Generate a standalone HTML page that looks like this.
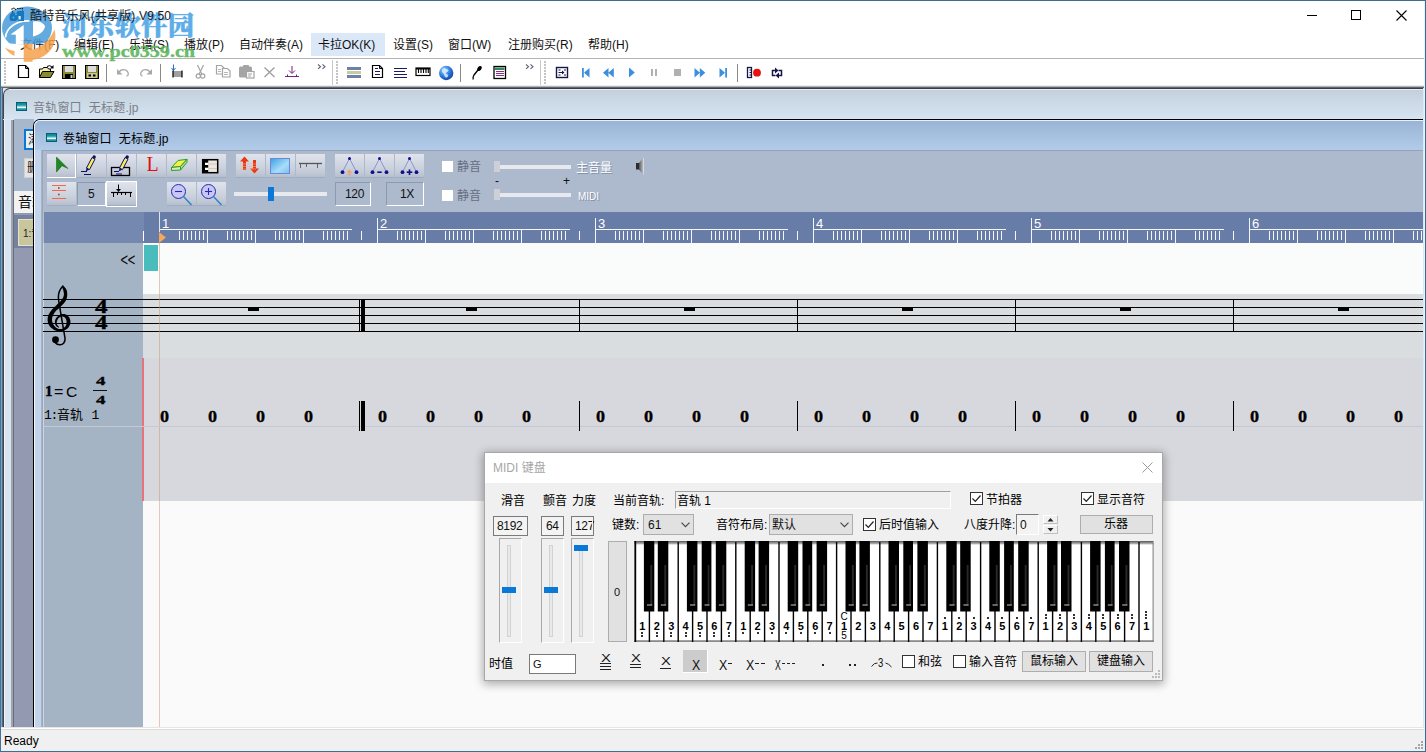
<!DOCTYPE html><html lang="zh-CN"><head><meta charset="utf-8"><title>酷特音乐风(共享版) V9.50</title><style>
*{box-sizing:border-box;margin:0;padding:0}
html,body{width:1426px;height:752px;overflow:hidden;background:#fff}
body{position:relative;font-family:"Liberation Sans","Noto Sans CJK SC",sans-serif;font-size:12px;color:#000}
div{position:absolute}
svg{position:absolute;overflow:visible}
.t{white-space:nowrap;line-height:1}
.s{white-space:nowrap;line-height:1;font-family:"Liberation Serif","Noto Serif CJK SC",serif;font-weight:bold}
.m{white-space:nowrap;line-height:1;font-family:"Liberation Mono","Noto Sans CJK SC",monospace}
</style></head><body>
<div style="left:0px;top:0px;width:1426px;height:752px;background:#fff;border:1px solid #3f6e8c;"></div>
<svg style="left:1300px;top:5px" width="120" height="22" viewBox="0 0 120 22"><g stroke="#000" stroke-width="1" fill="none" shape-rendering="crispEdges"><path d="M7 10.5h10"/><rect x="51.5" y="5.5" width="9" height="9"/></g><path d="M96.5 5.5l10 10M106.5 5.5l-10 10" stroke="#000" stroke-width="1.1" fill="none"/></svg>
<div style="left:311px;top:33px;width:74px;height:23px;background:#dbe8f8;"></div>
<div class="t" style="left:20px;top:39px;font-size:12px;color:#111;">文件(F)</div>
<div class="t" style="left:74px;top:39px;font-size:12px;color:#111;">编辑(E)</div>
<div class="t" style="left:129px;top:39px;font-size:12px;color:#111;">乐谱(S)</div>
<div class="t" style="left:184px;top:39px;font-size:12px;color:#111;">播放(P)</div>
<div class="t" style="left:239px;top:39px;font-size:12px;color:#111;">自动伴奏(A)</div>
<div class="t" style="left:318px;top:39px;font-size:12px;color:#111;">卡拉OK(K)</div>
<div class="t" style="left:393px;top:39px;font-size:12px;color:#111;">设置(S)</div>
<div class="t" style="left:448px;top:39px;font-size:12px;color:#111;">窗口(W)</div>
<div class="t" style="left:508px;top:39px;font-size:12px;color:#111;">注册购买(R)</div>
<div class="t" style="left:588px;top:39px;font-size:12px;color:#111;">帮助(H)</div>
<div style="left:1px;top:58px;width:1424px;height:1px;background:#b4b4b4;"></div>
<div style="left:4px;top:61px;width:2px;height:2px;background:#c4c4c4;"></div>
<div style="left:4px;top:64px;width:2px;height:2px;background:#c4c4c4;"></div>
<div style="left:4px;top:67px;width:2px;height:2px;background:#c4c4c4;"></div>
<div style="left:4px;top:70px;width:2px;height:2px;background:#c4c4c4;"></div>
<div style="left:4px;top:73px;width:2px;height:2px;background:#c4c4c4;"></div>
<div style="left:4px;top:76px;width:2px;height:2px;background:#c4c4c4;"></div>
<div style="left:4px;top:79px;width:2px;height:2px;background:#c4c4c4;"></div>
<div style="left:4px;top:82px;width:2px;height:2px;background:#c4c4c4;"></div>
<div style="left:336px;top:61px;width:2px;height:2px;background:#c4c4c4;"></div>
<div style="left:336px;top:64px;width:2px;height:2px;background:#c4c4c4;"></div>
<div style="left:336px;top:67px;width:2px;height:2px;background:#c4c4c4;"></div>
<div style="left:336px;top:70px;width:2px;height:2px;background:#c4c4c4;"></div>
<div style="left:336px;top:73px;width:2px;height:2px;background:#c4c4c4;"></div>
<div style="left:336px;top:76px;width:2px;height:2px;background:#c4c4c4;"></div>
<div style="left:336px;top:79px;width:2px;height:2px;background:#c4c4c4;"></div>
<div style="left:336px;top:82px;width:2px;height:2px;background:#c4c4c4;"></div>
<div style="left:544px;top:61px;width:2px;height:2px;background:#c4c4c4;"></div>
<div style="left:544px;top:64px;width:2px;height:2px;background:#c4c4c4;"></div>
<div style="left:544px;top:67px;width:2px;height:2px;background:#c4c4c4;"></div>
<div style="left:544px;top:70px;width:2px;height:2px;background:#c4c4c4;"></div>
<div style="left:544px;top:73px;width:2px;height:2px;background:#c4c4c4;"></div>
<div style="left:544px;top:76px;width:2px;height:2px;background:#c4c4c4;"></div>
<div style="left:544px;top:79px;width:2px;height:2px;background:#c4c4c4;"></div>
<div style="left:544px;top:82px;width:2px;height:2px;background:#c4c4c4;"></div>
<div style="left:332px;top:60px;width:1px;height:26px;background:#c8c8c8;"></div>
<div style="left:540px;top:60px;width:1px;height:26px;background:#c8c8c8;"></div>
<div style="left:106px;top:64px;width:1px;height:18px;background:#8a8a8a;"></div>
<div style="left:160px;top:64px;width:1px;height:18px;background:#8a8a8a;"></div>
<div style="left:460px;top:64px;width:1px;height:18px;background:#8a8a8a;"></div>
<div style="left:737px;top:64px;width:1px;height:18px;background:#8a8a8a;"></div>
<svg style="left:0;top:59px" width="800" height="27" viewBox="0 59 800 27"><path d="M18.500 65.500h7l3 3v9h-10z" fill="#fff" stroke="#000" stroke-width="1.200"/><path d="M25.500 65.500v3h3" fill="none" stroke="#000" stroke-width="1"/><path d="M39.500 77.500v-8.500h3l1-1.500h4l1 1.500h2v2.500" fill="#f4f0a8" stroke="#000" stroke-width="1"/><path d="M39.500 77.500l3-6h11.500l-3.500 6z" fill="#8b8a2e" stroke="#000" stroke-width="1"/><path d="M47 66.500q3-2 5 .5" fill="none" stroke="#000" stroke-width="1"/><path d="M53.500 65v3.500h-3.500z" fill="#000"/><rect x="62.5" y="65.500" width="13" height="13" fill="#8b8a3a" stroke="#000" stroke-width="1"/><rect x="65" y="66" width="8" height="6" fill="#dcdcdc"/><rect x="65" y="74" width="8" height="4.500" fill="#000"/><rect x="70.5" y="75" width="2" height="3" fill="#ccc"/><rect x="85.5" y="65.500" width="13" height="13" fill="#8b8a3a" stroke="#000" stroke-width="1"/><rect x="88" y="66" width="8" height="6" fill="#dcdcdc"/><rect x="87" y="73" width="10" height="5" fill="#c8c89a"/><rect x="88.5" y="74.500" width="2.500" height="2" fill="#000"/><rect x="93" y="74.500" width="2.500" height="2" fill="#000"/><g fill="none" stroke="#a8a8a8" stroke-width="1.300"><path d="M119 72.500c1.500-3.500 7-4 9 0 1 2.500-.5 3.500-1.500 3.500"/><path d="M150 72.500c-1.500-3.500-7-4-9 0-1 2.500.5 3.500 1.500 3.500"/></g><path d="M117 69v5.500h5.500z" fill="#a8a8a8"/><path d="M152 69v5.500h-5.500z" fill="#a8a8a8"/><path d="M173.500 64.500v6M171.500 68l2 2.500 2-2.500" fill="none" stroke="#2a6fd0" stroke-width="1"/><rect x="173" y="71" width="9" height="6" fill="#a0a0a0"/><path d="M173 70.500v7M182 70.500v7" stroke="#000" stroke-width="1.200"/><g fill="none" stroke="#a4a4a4" stroke-width="1.200"><path d="M197.500 65l4.500 9.500M203.500 65l-4.500 9.500"/><circle cx="198.300" cy="76" r="2.100"/><circle cx="202.700" cy="76" r="2.100"/></g><g fill="#fff" stroke="#a4a4a4" stroke-width="1.200"><path d="M216.500 65.500h5l2.500 2.500v6h-7.500z"/><path d="M222.500 68.500h5l2.500 2.500v6h-7.500z"/></g><path d="M218 69.500h3M218 71.500h3M224 72.500h4M224 74.500h4" stroke="#b8b8b8" stroke-width="1" shape-rendering="crispEdges"/><rect x="239" y="66.500" width="13" height="11" rx="1.500" fill="#a4a4a4"/><rect x="243" y="65" width="6" height="3" rx="1" fill="#a4a4a4"/><rect x="246.500" y="71.500" width="7.500" height="6.500" fill="#fff" stroke="#a4a4a4" stroke-width="1.200"/><path d="M248 74h4M248 76h3" stroke="#a4a4a4" stroke-width="1"/><path d="M264.500 67.500l10 9.500M274.500 67.500l-10 9.500" stroke="#a0a0a0" stroke-width="1.400" fill="none"/><path d="M292 66v7M289 70.500l3 3 3-3M285 76.500h14M287.500 76.500v-2M296.500 76.500v-2" stroke="#7a1f7a" stroke-width="1" fill="none"/><path d="M318 64.500l2.500 2.200-2.500 2.200M322.5 64.500l2.500 2.200-2.500 2.200" stroke="#5a6478" stroke-width="1.100" fill="none"/><path d="M526 64.500l2.500 2.200-2.500 2.200M530.5 64.500l2.500 2.200-2.500 2.200" stroke="#5a6478" stroke-width="1.100" fill="none"/><rect x="347" y="67" width="14" height="3" fill="#6d80a8"/><rect x="347" y="71" width="14" height="3" fill="#c8caa2"/><rect x="347" y="75" width="14" height="3" fill="#6d80a8"/><path d="M372.500 65.500h7l3 3v9h-10z" fill="#fff" stroke="#000" stroke-width="1.200"/><path d="M379.500 65.500v3h3" fill="none" stroke="#000" stroke-width="1"/><path d="M375 68.500h3M375 71.500h5M375 74.500h5" stroke="#1a1a60" stroke-width="1" shape-rendering="crispEdges"/><path d="M394 68.500h13M394 71.500h11M394 74.500h13M394 77.500h13" stroke="#1a1a60" stroke-width="1" shape-rendering="crispEdges"/><rect x="416" y="68" width="14" height="7.500" fill="#fff" stroke="#000" stroke-width="1.200"/><rect x="416" y="68" width="14" height="1.500" fill="#000"/><path d="M418.500 69v4M421 69v4M423.500 69v4M426 69v4M428.300 69v4" stroke="#000" stroke-width="1.100"/><defs><radialGradient id="gl" cx=".35" cy=".3" r=".8"><stop offset="0" stop-color="#9fd4ff"/><stop offset=".5" stop-color="#2f7fe0"/><stop offset="1" stop-color="#103a9a"/></radialGradient></defs><circle cx="446.200" cy="73" r="7.200" fill="url(#gl)"/><path d="M443 68.500c2-1 3 .5 4.500 1s1 2-.5 2.500-1 2 .5 2.500.5 2.500-1 3-2-1.500-2.500-3-2-2-2-3.500.3-2 1-2.500z" fill="#d8f0ff" opacity=".85"/><path d="M480 67.500l-6 7.500c-1 1.500-1.500 2.500-.8 4.500" stroke="#000" stroke-width="1.300" fill="none"/><ellipse cx="479.500" cy="68.500" rx="2.800" ry="1.900" transform="rotate(-50 479.500 68.500)" fill="#000"/><rect x="494" y="66.500" width="11.500" height="12" fill="#fff" stroke="#000" stroke-width="1.300"/><rect x="495" y="67.500" width="9.500" height="2.500" fill="#2e8b57"/><path d="M496 71.500h8M496 73.500h8M496 75.500h8" stroke="#8a2a8a" stroke-width="1" shape-rendering="crispEdges"/><rect x="556.500" y="67.500" width="11" height="10" fill="#fff" stroke="#15154a" stroke-width="1.400"/><path d="M558.500 70h2M558.500 72.500h5M558.500 75h2M564 70h2M564 75h2" stroke="#15154a" stroke-width="1"/><path d="M562 70.500l2.500 2-2.500 2z" fill="#15154a"/><g fill="#3c8fdc"><rect x="582" y="68" width="1.800" height="9.500"/><path d="M589.500 68v9.500l-5.500-4.750z"/><path d="M608.500 68v9.500l-5.500-4.750zM613.800 68v9.500l-5.500-4.750z"/><path d="M629 67.500v10l5.800-5z"/><path d="M694.500 68v9.500l5.500-4.750zM699.800 68v9.500l5.500-4.750z"/><path d="M719.500 68v9.500l5.500-4.750z"/><rect x="725.200" y="68" width="1.800" height="9.500"/></g><g fill="#b0b0b0"><rect x="651" y="69" width="2" height="7"/><rect x="655" y="69" width="2" height="7"/><rect x="674" y="69" width="7" height="7"/></g><rect x="747.500" y="67.500" width="4" height="10" fill="#fff" stroke="#15154a" stroke-width="1.300"/><path d="M749.500 70h2M749.500 72.500h2M749.500 75h2" stroke="#15154a" stroke-width="1"/><circle cx="757" cy="72.700" r="3.900" fill="#e81010"/><path d="M775.500 70.500h-3v5h3M778.500 70.500h3v5h-3" fill="none" stroke="#15154a" stroke-width="1.500"/><path d="M775 67.500v6l3.500-3zM779 72.500v6l-3.500-3z" fill="#15154a"/></svg>
<div style="left:1px;top:85px;width:1424px;height:1px;background:#ececec;"></div>
<div style="left:1px;top:86px;width:1424px;height:1px;background:#b4b4b4;"></div>
<div style="left:1px;top:87px;width:1424px;height:1px;background:#62666c;"></div>
<div style="left:1px;top:88px;width:1424px;height:639px;background:#dbe7f1;"></div>
<div style="left:1px;top:88px;width:1px;height:639px;background:#7ba3c4;"></div>
<div style="left:2px;top:88px;width:1px;height:639px;background:#5c6874;"></div>
<div style="left:3px;top:88px;width:1421px;height:31px;background:linear-gradient(#c3d0dc,#d6e4f1);border-top-left-radius:7px;border-top:1px solid #3a3e44;border-left:1px solid #3c4652;"></div>
<div style="left:9px;top:89px;width:1415px;height:1px;background:#e6eef6;"></div>
<div style="left:3px;top:120px;width:1px;height:607px;background:#3c4652;"></div>
<div style="left:4px;top:120px;width:1px;height:607px;background:#f0f4fc;"></div>
<div style="left:5px;top:120px;width:6px;height:607px;background:#d8e4f0;"></div>
<div style="left:11px;top:120px;width:2px;height:607px;background:#a0a4ae;"></div>
<div style="left:13px;top:120px;width:1px;height:607px;background:#686c78;"></div>
<div style="left:16px;top:102px;width:11px;height:9px;background:linear-gradient(#0d8a94 0,#1a9aa0 30%,#aee8ea 55%,#fff 65%,#35aab0 80%,#0d8a94 100%);border:1px solid #0a5b78;"></div>
<div class="t" style="left:33px;top:102px;font-size:12px;color:#7a8088;letter-spacing:.2px;">音轨窗口&nbsp; 无标题.jp</div>
<div style="left:14px;top:119px;width:20px;height:73px;background:#a9b7cc;"></div>
<div style="left:24px;top:129px;width:12px;height:21px;background:#e9eff7;border:2px solid #0a78d6;"></div>
<div class="t" style="left:28px;top:134px;font-size:12px;color:#222;">添加</div>
<div style="left:24px;top:158px;width:12px;height:20px;background:#e4e4e4;border:1px solid #d0d0d0;"></div>
<div class="t" style="left:27px;top:162px;font-size:12px;color:#222;">删除</div>
<div style="left:14px;top:191px;width:20px;height:22px;background:#f2f2f2;"></div>
<div class="t" style="left:18px;top:195px;font-size:14px;color:#111;">音轨</div>
<div style="left:14px;top:213px;width:20px;height:514px;background:#9299b0;"></div>
<div style="left:14px;top:215px;width:20px;height:33px;background:#74819f;"></div>
<div style="left:18px;top:219px;width:16px;height:27px;background:#c9c59c;border:1px solid #e4e2cc;"></div>
<div class="t" style="left:23px;top:229px;font-size:10px;color:#222;">1:音轨 1</div>
<div style="left:33px;top:119px;width:1391px;height:608px;background:#c2d4ec;border-top-left-radius:7px;border-left:1px solid #000;border-top:1px solid #000;"></div>
<div style="left:34px;top:120px;width:1390px;height:30px;background:linear-gradient(#9ab4d6,#b2cbe9);border-top-left-radius:6px;border-top:1px solid #e8f0fa;border-left:1px solid #e8f0fa;"></div>
<div style="left:46px;top:133px;width:11px;height:9px;background:linear-gradient(#0d8a94 0,#1a9aa0 30%,#aee8ea 55%,#fff 65%,#35aab0 80%,#0d8a94 100%);border:1px solid #0a5b78;"></div>
<div class="t" style="left:63px;top:133px;font-size:12px;color:#000;letter-spacing:.2px;">卷轴窗口&nbsp; 无标题.jp</div>
<div style="left:41px;top:150px;width:1px;height:577px;background:#a8b2c2;"></div>
<div style="left:42px;top:150px;width:1px;height:577px;background:#9ca6b8;"></div>
<div style="left:43px;top:150px;width:1381px;height:62px;background:#adb9cd;border-top:1px solid #93a2b8;"></div>
<div style="left:47px;top:154px;width:29px;height:24px;background:linear-gradient(#dfe3ec 0,#d0d6e1 45%,#c3cad7 80%,#b6bfce 100%);border-right:1px solid #fff;border-bottom:1px solid #fff;"></div>
<div style="left:77px;top:154px;width:29px;height:24px;background:linear-gradient(#dfe3ec 0,#d0d6e1 45%,#c3cad7 80%,#b6bfce 100%);border-bottom:1px solid #a0acbf;"></div>
<div style="left:107px;top:154px;width:29px;height:24px;background:linear-gradient(#dfe3ec 0,#d0d6e1 45%,#c3cad7 80%,#b6bfce 100%);border-bottom:1px solid #a0acbf;"></div>
<div style="left:137px;top:154px;width:29px;height:24px;background:linear-gradient(#dfe3ec 0,#d0d6e1 45%,#c3cad7 80%,#b6bfce 100%);border-bottom:1px solid #a0acbf;"></div>
<div style="left:167px;top:154px;width:29px;height:24px;background:linear-gradient(#dfe3ec 0,#d0d6e1 45%,#c3cad7 80%,#b6bfce 100%);border-bottom:1px solid #a0acbf;"></div>
<div style="left:197px;top:154px;width:29px;height:24px;background:linear-gradient(#dfe3ec 0,#d0d6e1 45%,#c3cad7 80%,#b6bfce 100%);border-bottom:1px solid #a0acbf;"></div>
<div style="left:236px;top:154px;width:29px;height:24px;background:linear-gradient(#dfe3ec 0,#d0d6e1 45%,#c3cad7 80%,#b6bfce 100%);border-bottom:1px solid #a0acbf;"></div>
<div style="left:266px;top:154px;width:29px;height:24px;background:linear-gradient(#dfe3ec 0,#d0d6e1 45%,#c3cad7 80%,#b6bfce 100%);border-bottom:1px solid #a0acbf;"></div>
<div style="left:296px;top:154px;width:29px;height:24px;background:linear-gradient(#dfe3ec 0,#d0d6e1 45%,#c3cad7 80%,#b6bfce 100%);border-bottom:1px solid #a0acbf;"></div>
<div style="left:335px;top:154px;width:29px;height:24px;background:linear-gradient(#dfe3ec 0,#d0d6e1 45%,#c3cad7 80%,#b6bfce 100%);border-bottom:1px solid #a0acbf;"></div>
<div style="left:365px;top:154px;width:29px;height:24px;background:linear-gradient(#dfe3ec 0,#d0d6e1 45%,#c3cad7 80%,#b6bfce 100%);border-bottom:1px solid #a0acbf;"></div>
<div style="left:395px;top:154px;width:29px;height:24px;background:linear-gradient(#dfe3ec 0,#d0d6e1 45%,#c3cad7 80%,#b6bfce 100%);border-bottom:1px solid #a0acbf;"></div>
<div style="left:47px;top:182px;width:29px;height:24px;background:linear-gradient(#dfe3ec 0,#d0d6e1 45%,#c3cad7 80%,#b6bfce 100%);border-bottom:1px solid #a0acbf;"></div>
<div style="left:77px;top:182px;width:29px;height:24px;background:#adb9cd;border-top:1px solid #8d9bb0;border-left:1px solid #8d9bb0;border-right:1px solid #fff;border-bottom:1px solid #fff;"></div>
<div style="left:106px;top:181px;width:31px;height:26px;background:#fff;"></div>
<div style="left:107px;top:182px;width:29px;height:24px;background:linear-gradient(#dfe3ec 0,#d0d6e1 45%,#c3cad7 80%,#b6bfce 100%);border-bottom:1px solid #a0acbf;"></div>
<div style="left:167px;top:182px;width:29px;height:24px;background:linear-gradient(#dfe3ec 0,#d0d6e1 45%,#c3cad7 80%,#b6bfce 100%);border-bottom:1px solid #a0acbf;"></div>
<div style="left:197px;top:182px;width:29px;height:24px;background:linear-gradient(#dfe3ec 0,#d0d6e1 45%,#c3cad7 80%,#b6bfce 100%);border-bottom:1px solid #a0acbf;"></div>
<div style="left:335px;top:182px;width:36px;height:24px;background:#adb9cd;border-top:1px solid #8d9bb0;border-left:1px solid #8d9bb0;border-right:1px solid #fff;border-bottom:1px solid #fff;"></div>
<div style="left:386px;top:182px;width:38px;height:24px;background:#adb9cd;border-top:1px solid #8d9bb0;border-left:1px solid #8d9bb0;border-right:1px solid #fff;border-bottom:1px solid #fff;"></div>
<div class="t" style="left:345px;top:188px;font-size:12px;color:#111;letter-spacing:-0.3px;">120</div>
<div class="t" style="left:400px;top:188px;font-size:12px;color:#111;letter-spacing:-0.5px;">1X</div>
<div class="t" style="left:88px;top:188px;font-size:12px;color:#111;">5</div>
<div style="left:234px;top:192px;width:93px;height:4px;background:#e6e9ee;"></div>
<div style="left:268px;top:187px;width:6px;height:14px;background:#0a78d6;"></div>
<div style="left:442px;top:161px;width:11px;height:11px;background:#fff;"></div>
<div style="left:442px;top:190px;width:11px;height:11px;background:#fff;"></div>
<div class="t" style="left:457px;top:161px;font-size:12px;color:#667083;">静音</div>
<div class="t" style="left:457px;top:190px;font-size:12px;color:#667083;">静音</div>
<div style="left:494px;top:165px;width:77px;height:4px;background:#e6e9ee;"></div>
<div style="left:494px;top:161px;width:6px;height:11px;background:#cdd0d6;"></div>
<div style="left:494px;top:193px;width:77px;height:4px;background:#e6e9ee;"></div>
<div style="left:494px;top:189px;width:6px;height:11px;background:#cdd0d6;"></div>
<div class="t" style="left:495px;top:175px;font-size:12px;color:#111;">-</div>
<div class="t" style="left:563px;top:175px;font-size:12px;color:#111;">+</div>
<div class="t" style="left:576px;top:162px;font-size:12px;color:#fff;text-shadow:1px 1px 0 #8391a8;">主音量</div>
<div class="t" style="left:578px;top:192px;font-size:10px;color:#fff;text-shadow:1px 1px 0 #8391a8;">MIDI</div>
<svg style="left:0;top:150px" width="700" height="62" viewBox="0 150 700 62"><path d="M56.500 157v15l5.500-6.300 6 2.800z" fill="#1c8a1c" stroke="#0b5a0b" stroke-width=".5"/><g transform="translate(85 156)"><path d="M1.500 12l5.500-10.500 3 1.600-5.500 10.500z" fill="#f6ee52" stroke="#10106a" stroke-width="1"/><path d="M7 1.500l1.200-1.800c.8-.9 3 .2 2.600 1.500l-.9 1.900z" fill="#10106a"/><path d="M1.500 12l-.7 3.200 3.600-1.500z" fill="#10106a"/></g><path d="M81 171.500h6M84 174.500h7" stroke="#10106a" stroke-width="1.100"/><rect x="111.500" y="167.500" width="18" height="8" fill="none" stroke="#000" stroke-width="1.300"/><g transform="translate(118 156)"><path d="M1.500 12l5.500-10.500 3 1.600-5.500 10.500z" fill="#f6ee52" stroke="#10106a" stroke-width="1"/><path d="M7 1.500l1.200-1.800c.8-.9 3 .2 2.600 1.500l-.9 1.900z" fill="#10106a"/><path d="M1.500 12l-.7 3.200 3.600-1.500z" fill="#10106a"/></g><path d="M114 171.500h5M116 174h6" stroke="#10106a" stroke-width="1.100"/><path d="M171.500 167.500L178 160.500L187 159.300L180.500 166.500z" fill="#f4f04a" stroke="#2c9c2c" stroke-width="1" stroke-linejoin="round"/><path d="M171.500 167.500L180.500 166.500V170L171.500 170.500z" fill="#dcebb0" stroke="#2c9c2c" stroke-width="1" stroke-linejoin="round"/><path d="M180.500 166.500L187 159.300V162.300L180.500 170z" fill="#b8d890" stroke="#2c9c2c" stroke-width="1" stroke-linejoin="round"/><rect x="202.700" y="159.700" width="15" height="13" fill="#ece8e0" stroke="#000" stroke-width="1.500"/><rect x="202.700" y="159.700" width="5.500" height="13" fill="#000"/><rect x="205" y="162.700" width="3.500" height="2.300" fill="#fff"/><rect x="205" y="167.700" width="3.500" height="2.300" fill="#fff"/><path d="M209 164h8M209 168.500h8" stroke="#c8c0b0" stroke-width=".8"/><g fill="#e8380d"><path d="M244.500 156.500l-4.500 5h3v8.500h3v-8.500h3z"/><path d="M254.500 173.500l-4.500-5h3v-8.500h3v8.500h3z"/></g><path d="M240 164h16M240 166.500h16M240 169h16" stroke="#f0b0a0" stroke-width=".6"/><defs><linearGradient id="bg8" x1="0" y1="0" x2="1" y2="1"><stop offset="0" stop-color="#3aa0e8"/><stop offset=".6" stop-color="#a8dcf8"/><stop offset="1" stop-color="#7cc0f0"/></linearGradient></defs><rect x="270.500" y="158.500" width="19" height="15" fill="url(#bg8)" stroke="#6a8ad8" stroke-width="1"/><path d="M299 163.500h23" stroke="#555" stroke-width="1.300"/><path d="M300.500 164v4M306.500 164v3M317.500 164v4" stroke="#666" stroke-width="1"/><path d="M349.5 158.500l-7 13.500M349.5 158.500l7 13.500" stroke="#6a78c8" stroke-width=".7" fill="none"/><circle cx="349.5" cy="158.600" r="1.500" fill="#10108a"/><circle cx="342.5" cy="172.200" r="1.900" fill="#10108a"/><circle cx="356.5" cy="172.200" r="1.900" fill="#10108a"/><path d="M349.5 169.500l-2.800 3h1.800v3h2v-3h1.800z" fill="#f4a070"/><path d="M379.5 158.500l-7 13.500M379.5 158.500l7 13.500" stroke="#6a78c8" stroke-width=".7" fill="none"/><circle cx="379.5" cy="158.600" r="1.500" fill="#10108a"/><circle cx="372.5" cy="172.200" r="1.900" fill="#10108a"/><circle cx="386.5" cy="172.200" r="1.900" fill="#10108a"/><rect x="377.3" y="171.400" width="4.400" height="1.600" fill="#10108a"/><path d="M409.5 158.500l-7 13.500M409.5 158.500l7 13.500" stroke="#6a78c8" stroke-width=".7" fill="none"/><circle cx="409.5" cy="158.600" r="1.500" fill="#10108a"/><circle cx="402.5" cy="172.200" r="1.900" fill="#10108a"/><circle cx="416.5" cy="172.200" r="1.900" fill="#10108a"/><rect x="406.7" y="171.400" width="5.600" height="1.600" fill="#10108a"/><rect x="408.7" y="169.400" width="1.600" height="5.600" fill="#10108a"/><path d="M52 185.500h14M52 190.500h14M52 198.500h14" stroke="#f06848" stroke-width="1"/><rect x="58" y="187.200" width="1.600" height="1.600" fill="#c83018"/><rect x="58" y="193.700" width="1.600" height="1.600" fill="#c83018"/><path d="M111 192.500h21" stroke="#000" stroke-width="1.200"/><path d="M113.500 192.500v4.500M117.500 192.500v2.500M121.500 192.500v2.500M125.500 192.500v2.500M130.500 192.500v4.500M118.500 184.500v6" stroke="#000" stroke-width="1"/><path d="M116 189l2.500 3 2.500-3z" fill="#000"/><circle cx="178.5" cy="191.500" r="7" fill="#c8c8f4" stroke="#2828b8" stroke-width="1"/><path d="M183.5 196.500l8 8.500" stroke="#2a80c0" stroke-width="1.400"/><path d="M175.0 191.500h7" stroke="#2828b8" stroke-width="1.100"/><circle cx="208.5" cy="191.500" r="7" fill="#c8c8f4" stroke="#2828b8" stroke-width="1"/><path d="M213.5 196.500l8 8.500" stroke="#2a80c0" stroke-width="1.400"/><path d="M205.0 191.500h7" stroke="#2828b8" stroke-width="1.100"/><path d="M208.5 188v7" stroke="#2828b8" stroke-width="1.100"/><defs><linearGradient id="spk" x1="0" y1="0" x2="1" y2="0"><stop offset="0" stop-color="#555"/><stop offset="1" stop-color="#b8bcc4"/></linearGradient></defs><rect x="636" y="163" width="3" height="6.500" fill="#2c2c2c"/><path d="M639 163l4-5v16.500l-4-5z" fill="url(#spk)"/><path d="M643.500 158v16.500" stroke="#d4dae4" stroke-width="1"/></svg>
<div class="s" style="left:146.5px;top:154.3px;font-size:20px;color:#e01010;font-weight:normal;">L</div>
<div style="left:43px;top:212px;width:1px;height:31px;background:#b4c0d2;"></div>
<div style="left:44px;top:212px;width:100px;height:31px;background:#7488b0;"></div>
<div style="left:144px;top:212px;width:1280px;height:31px;background:#677ca7;"></div>
<div style="left:143px;top:231px;width:1px;height:10px;background:#fff;"></div>
<svg style="left:0;top:0" width="1426" height="752" shape-rendering="crispEdges"><g stroke="#f4f6fa" stroke-width="1" fill="none"><path d="M159.5 212v20" stroke="#dfe4ee"/><path d="M160 229.500H352"/><path d="M179.5 231v9"/><path d="M183.5 231v9"/><path d="M187.5 231v9"/><path d="M191.5 231v9"/><path d="M195.5 231v9"/><path d="M199.5 231v9"/><path d="M203.5 231v9"/><path d="M207.5 230v13"/><path d="M227.5 231v9"/><path d="M231.5 231v9"/><path d="M235.5 231v9"/><path d="M239.5 231v9"/><path d="M243.5 231v9"/><path d="M247.5 231v9"/><path d="M251.5 231v9"/><path d="M255.5 230v13"/><path d="M275.5 231v9"/><path d="M279.5 231v9"/><path d="M283.5 231v9"/><path d="M287.5 231v9"/><path d="M291.5 231v9"/><path d="M295.5 231v9"/><path d="M299.5 231v9"/><path d="M303.5 230v13"/><path d="M323.5 231v9"/><path d="M327.5 231v9"/><path d="M331.5 231v9"/><path d="M335.5 231v9"/><path d="M339.5 231v9"/><path d="M343.5 231v9"/><path d="M347.5 231v9"/><path d="M361.5 231v9"/><path d="M377.5 218v25"/><path d="M378 229.500H570"/><path d="M397.5 231v9"/><path d="M401.5 231v9"/><path d="M405.5 231v9"/><path d="M409.5 231v9"/><path d="M413.5 231v9"/><path d="M417.5 231v9"/><path d="M421.5 231v9"/><path d="M425.5 230v13"/><path d="M445.5 231v9"/><path d="M449.5 231v9"/><path d="M453.5 231v9"/><path d="M457.5 231v9"/><path d="M461.5 231v9"/><path d="M465.5 231v9"/><path d="M469.5 231v9"/><path d="M473.5 230v13"/><path d="M493.5 231v9"/><path d="M497.5 231v9"/><path d="M501.5 231v9"/><path d="M505.5 231v9"/><path d="M509.5 231v9"/><path d="M513.5 231v9"/><path d="M517.5 231v9"/><path d="M521.5 230v13"/><path d="M541.5 231v9"/><path d="M545.5 231v9"/><path d="M549.5 231v9"/><path d="M553.5 231v9"/><path d="M557.5 231v9"/><path d="M561.5 231v9"/><path d="M565.5 231v9"/><path d="M579.5 231v9"/><path d="M595.5 218v25"/><path d="M596 229.500H788"/><path d="M615.5 231v9"/><path d="M619.5 231v9"/><path d="M623.5 231v9"/><path d="M627.5 231v9"/><path d="M631.5 231v9"/><path d="M635.5 231v9"/><path d="M639.5 231v9"/><path d="M643.5 230v13"/><path d="M663.5 231v9"/><path d="M667.5 231v9"/><path d="M671.5 231v9"/><path d="M675.5 231v9"/><path d="M679.5 231v9"/><path d="M683.5 231v9"/><path d="M687.5 231v9"/><path d="M691.5 230v13"/><path d="M711.5 231v9"/><path d="M715.5 231v9"/><path d="M719.5 231v9"/><path d="M723.5 231v9"/><path d="M727.5 231v9"/><path d="M731.5 231v9"/><path d="M735.5 231v9"/><path d="M739.5 230v13"/><path d="M759.5 231v9"/><path d="M763.5 231v9"/><path d="M767.5 231v9"/><path d="M771.5 231v9"/><path d="M775.5 231v9"/><path d="M779.5 231v9"/><path d="M783.5 231v9"/><path d="M797.5 231v9"/><path d="M813.5 218v25"/><path d="M814 229.500H1006"/><path d="M833.5 231v9"/><path d="M837.5 231v9"/><path d="M841.5 231v9"/><path d="M845.5 231v9"/><path d="M849.5 231v9"/><path d="M853.5 231v9"/><path d="M857.5 231v9"/><path d="M861.5 230v13"/><path d="M881.5 231v9"/><path d="M885.5 231v9"/><path d="M889.5 231v9"/><path d="M893.5 231v9"/><path d="M897.5 231v9"/><path d="M901.5 231v9"/><path d="M905.5 231v9"/><path d="M909.5 230v13"/><path d="M929.5 231v9"/><path d="M933.5 231v9"/><path d="M937.5 231v9"/><path d="M941.5 231v9"/><path d="M945.5 231v9"/><path d="M949.5 231v9"/><path d="M953.5 231v9"/><path d="M957.5 230v13"/><path d="M977.5 231v9"/><path d="M981.5 231v9"/><path d="M985.5 231v9"/><path d="M989.5 231v9"/><path d="M993.5 231v9"/><path d="M997.5 231v9"/><path d="M1001.5 231v9"/><path d="M1015.5 231v9"/><path d="M1031.5 218v25"/><path d="M1032 229.500H1224"/><path d="M1051.5 231v9"/><path d="M1055.5 231v9"/><path d="M1059.5 231v9"/><path d="M1063.5 231v9"/><path d="M1067.5 231v9"/><path d="M1071.5 231v9"/><path d="M1075.5 231v9"/><path d="M1079.5 230v13"/><path d="M1099.5 231v9"/><path d="M1103.5 231v9"/><path d="M1107.5 231v9"/><path d="M1111.5 231v9"/><path d="M1115.5 231v9"/><path d="M1119.5 231v9"/><path d="M1123.5 231v9"/><path d="M1127.5 230v13"/><path d="M1147.5 231v9"/><path d="M1151.5 231v9"/><path d="M1155.5 231v9"/><path d="M1159.5 231v9"/><path d="M1163.5 231v9"/><path d="M1167.5 231v9"/><path d="M1171.5 231v9"/><path d="M1175.5 230v13"/><path d="M1195.5 231v9"/><path d="M1199.5 231v9"/><path d="M1203.5 231v9"/><path d="M1207.5 231v9"/><path d="M1211.5 231v9"/><path d="M1215.5 231v9"/><path d="M1219.5 231v9"/><path d="M1233.5 231v9"/><path d="M1249.5 218v25"/><path d="M1250 229.500H1424"/><path d="M1269.5 231v9"/><path d="M1273.5 231v9"/><path d="M1277.5 231v9"/><path d="M1281.5 231v9"/><path d="M1285.5 231v9"/><path d="M1289.5 231v9"/><path d="M1293.5 231v9"/><path d="M1297.5 230v13"/><path d="M1317.5 231v9"/><path d="M1321.5 231v9"/><path d="M1325.5 231v9"/><path d="M1329.5 231v9"/><path d="M1333.5 231v9"/><path d="M1337.5 231v9"/><path d="M1341.5 231v9"/><path d="M1345.5 230v13"/><path d="M1365.5 231v9"/><path d="M1369.5 231v9"/><path d="M1373.5 231v9"/><path d="M1377.5 231v9"/><path d="M1381.5 231v9"/><path d="M1385.5 231v9"/><path d="M1389.5 231v9"/><path d="M1393.5 230v13"/><path d="M1413.5 231v9"/><path d="M1417.5 231v9"/><path d="M1421.5 231v9"/></g></svg>
<div class="t" style="left:162px;top:217px;font-size:13px;color:#fff;">1</div>
<div class="t" style="left:380px;top:217px;font-size:13px;color:#fff;">2</div>
<div class="t" style="left:598px;top:217px;font-size:13px;color:#fff;">3</div>
<div class="t" style="left:816px;top:217px;font-size:13px;color:#fff;">4</div>
<div class="t" style="left:1034px;top:217px;font-size:13px;color:#fff;">5</div>
<div class="t" style="left:1252px;top:217px;font-size:13px;color:#fff;">6</div>
<div style="left:43px;top:243px;width:1px;height:484px;background:#ccd6e2;"></div>
<div style="left:44px;top:243px;width:99px;height:484px;background:#a5b4c4;"></div>
<div style="left:34px;top:150px;width:1px;height:577px;background:#f4f8fc;"></div>
<div style="left:143px;top:243px;width:1281px;height:51px;background:#fafbfb;"></div>
<div style="left:143px;top:294px;width:1281px;height:64px;background:#d9dde0;"></div>
<div style="left:143px;top:358px;width:1281px;height:143px;background:#d7d8dd;"></div>
<div style="left:143px;top:501px;width:1281px;height:226px;background:#fafafb;"></div>
<div style="left:144px;top:245px;width:14px;height:26px;background:#4bbcbc;"></div>
<div style="left:43px;top:299px;width:1381px;height:1px;background:#000;height:1.3px;"></div>
<div style="left:43px;top:307px;width:1381px;height:1px;background:#000;height:1.3px;"></div>
<div style="left:43px;top:315px;width:1381px;height:1px;background:#000;height:1.3px;"></div>
<div style="left:43px;top:323px;width:1381px;height:1px;background:#000;height:1.3px;"></div>
<div style="left:43px;top:331px;width:1381px;height:1px;background:#000;height:1.3px;"></div>
<div style="left:159px;top:243px;width:1px;height:484px;background:rgba(205,150,115,.5);"></div>
<svg style="left:159px;top:232px" width="8" height="12"><path d="M0 0L7 5.5L0 11z" fill="#f5a85a"/></svg>
<div style="left:142px;top:358px;width:2px;height:143px;background:#e8737a;"></div>
<div style="left:43px;top:426px;width:1381px;height:1px;background:#c6c9d2;"></div>
<div style="left:359px;top:299px;width:1px;height:33px;background:#000;"></div>
<div style="left:361px;top:299px;width:4px;height:33px;background:#000;"></div>
<div style="left:359px;top:401px;width:1px;height:30px;background:#000;"></div>
<div style="left:361px;top:401px;width:4px;height:30px;background:#000;"></div>
<div style="left:579px;top:299px;width:1px;height:33px;background:#000;"></div>
<div style="left:579px;top:401px;width:1px;height:30px;background:#000;"></div>
<div style="left:797px;top:299px;width:1px;height:33px;background:#000;"></div>
<div style="left:797px;top:401px;width:1px;height:30px;background:#000;"></div>
<div style="left:1015px;top:299px;width:1px;height:33px;background:#000;"></div>
<div style="left:1015px;top:401px;width:1px;height:30px;background:#000;"></div>
<div style="left:1233px;top:299px;width:1px;height:33px;background:#000;"></div>
<div style="left:1233px;top:401px;width:1px;height:30px;background:#000;"></div>
<div style="left:248px;top:307px;width:11px;height:4px;background:#000;"></div>
<div style="left:466px;top:307px;width:11px;height:4px;background:#000;"></div>
<div style="left:684px;top:307px;width:11px;height:4px;background:#000;"></div>
<div style="left:902px;top:307px;width:11px;height:4px;background:#000;"></div>
<div style="left:1120px;top:307px;width:11px;height:4px;background:#000;"></div>
<div style="left:1338px;top:307px;width:11px;height:4px;background:#000;"></div>
<div class="s" style="left:159.5px;top:408.5px;font-size:16.5px;color:#000;transform:scaleX(1.1);transform-origin:0 0;-webkit-text-stroke:.3px #000;">0</div>
<div class="s" style="left:207.5px;top:408.5px;font-size:16.5px;color:#000;transform:scaleX(1.1);transform-origin:0 0;-webkit-text-stroke:.3px #000;">0</div>
<div class="s" style="left:255.5px;top:408.5px;font-size:16.5px;color:#000;transform:scaleX(1.1);transform-origin:0 0;-webkit-text-stroke:.3px #000;">0</div>
<div class="s" style="left:303.5px;top:408.5px;font-size:16.5px;color:#000;transform:scaleX(1.1);transform-origin:0 0;-webkit-text-stroke:.3px #000;">0</div>
<div class="s" style="left:377.5px;top:408.5px;font-size:16.5px;color:#000;transform:scaleX(1.1);transform-origin:0 0;-webkit-text-stroke:.3px #000;">0</div>
<div class="s" style="left:425.5px;top:408.5px;font-size:16.5px;color:#000;transform:scaleX(1.1);transform-origin:0 0;-webkit-text-stroke:.3px #000;">0</div>
<div class="s" style="left:473.5px;top:408.5px;font-size:16.5px;color:#000;transform:scaleX(1.1);transform-origin:0 0;-webkit-text-stroke:.3px #000;">0</div>
<div class="s" style="left:521.5px;top:408.5px;font-size:16.5px;color:#000;transform:scaleX(1.1);transform-origin:0 0;-webkit-text-stroke:.3px #000;">0</div>
<div class="s" style="left:595.5px;top:408.5px;font-size:16.5px;color:#000;transform:scaleX(1.1);transform-origin:0 0;-webkit-text-stroke:.3px #000;">0</div>
<div class="s" style="left:643.5px;top:408.5px;font-size:16.5px;color:#000;transform:scaleX(1.1);transform-origin:0 0;-webkit-text-stroke:.3px #000;">0</div>
<div class="s" style="left:691.5px;top:408.5px;font-size:16.5px;color:#000;transform:scaleX(1.1);transform-origin:0 0;-webkit-text-stroke:.3px #000;">0</div>
<div class="s" style="left:739.5px;top:408.5px;font-size:16.5px;color:#000;transform:scaleX(1.1);transform-origin:0 0;-webkit-text-stroke:.3px #000;">0</div>
<div class="s" style="left:813.5px;top:408.5px;font-size:16.5px;color:#000;transform:scaleX(1.1);transform-origin:0 0;-webkit-text-stroke:.3px #000;">0</div>
<div class="s" style="left:861.5px;top:408.5px;font-size:16.5px;color:#000;transform:scaleX(1.1);transform-origin:0 0;-webkit-text-stroke:.3px #000;">0</div>
<div class="s" style="left:909.5px;top:408.5px;font-size:16.5px;color:#000;transform:scaleX(1.1);transform-origin:0 0;-webkit-text-stroke:.3px #000;">0</div>
<div class="s" style="left:957.5px;top:408.5px;font-size:16.5px;color:#000;transform:scaleX(1.1);transform-origin:0 0;-webkit-text-stroke:.3px #000;">0</div>
<div class="s" style="left:1031.5px;top:408.5px;font-size:16.5px;color:#000;transform:scaleX(1.1);transform-origin:0 0;-webkit-text-stroke:.3px #000;">0</div>
<div class="s" style="left:1079.5px;top:408.5px;font-size:16.5px;color:#000;transform:scaleX(1.1);transform-origin:0 0;-webkit-text-stroke:.3px #000;">0</div>
<div class="s" style="left:1127.5px;top:408.5px;font-size:16.5px;color:#000;transform:scaleX(1.1);transform-origin:0 0;-webkit-text-stroke:.3px #000;">0</div>
<div class="s" style="left:1175.5px;top:408.5px;font-size:16.5px;color:#000;transform:scaleX(1.1);transform-origin:0 0;-webkit-text-stroke:.3px #000;">0</div>
<div class="s" style="left:1249.5px;top:408.5px;font-size:16.5px;color:#000;transform:scaleX(1.1);transform-origin:0 0;-webkit-text-stroke:.3px #000;">0</div>
<div class="s" style="left:1297.5px;top:408.5px;font-size:16.5px;color:#000;transform:scaleX(1.1);transform-origin:0 0;-webkit-text-stroke:.3px #000;">0</div>
<div class="s" style="left:1345.5px;top:408.5px;font-size:16.5px;color:#000;transform:scaleX(1.1);transform-origin:0 0;-webkit-text-stroke:.3px #000;">0</div>
<div class="s" style="left:1393.5px;top:408.5px;font-size:16.5px;color:#000;transform:scaleX(1.1);transform-origin:0 0;-webkit-text-stroke:.3px #000;">0</div>
<div class="t" style="left:120.5px;top:253px;font-size:13px;color:#000;letter-spacing:-0.4px;transform:scaleY(1.4);transform-origin:50% 50%;">&lt;&lt;</div>
<svg style="left:0;top:0" width="100" height="360"><path d="M62.0 287.1 L62.2 287.5 L62.4 288.0 L62.5 288.4 L62.7 288.8 L62.9 289.2 L63.0 289.6 L63.2 289.9 L63.3 290.3 L63.4 290.6 L63.4 291.0 L63.5 291.4 L63.6 291.8 L63.7 292.2 L63.8 292.7 L63.8 293.1 L63.9 293.6 L63.9 294.0 L63.9 294.4 L63.9 294.9 L63.8 295.3 L63.7 295.7 L63.6 296.1 L63.5 296.5 L63.4 296.9 L63.2 297.3 L63.0 297.7 L62.8 298.1 L62.5 298.6 L62.3 299.0 L62.0 299.4 L61.7 299.8 L61.3 300.3 L60.8 300.8 L60.4 301.4 L59.8 301.9 L59.3 302.4 L58.7 303.0 L58.2 303.5 L57.6 304.1 L57.1 304.6 L56.7 305.1 L56.2 305.5 L55.7 306.0 L55.2 306.4 L54.6 306.9 L54.1 307.3 L53.5 307.9 L53.0 308.4 L52.5 309.0 L51.9 309.6 L51.5 310.3 L51.0 310.9 L50.5 311.6 L50.0 312.3 L49.6 313.0 L49.1 313.8 L48.7 314.6 L48.4 315.4 L48.1 316.2 L47.8 317.0 L47.7 317.9 L47.6 318.7 L47.6 319.5 L47.6 320.3 L47.7 321.1 L47.8 321.9 L48.0 322.7 L48.3 323.5 L48.6 324.2 L48.9 324.9 L49.3 325.6 L49.8 326.3 L50.4 326.9 L50.9 327.5 L51.5 328.1 L52.2 328.6 L52.8 329.1 L53.5 329.5 L54.1 329.9 L54.8 330.2 L55.5 330.5 L56.2 330.8 L56.9 330.9 L57.6 331.1 L58.3 331.1 L59.0 331.2 L59.7 331.2 L60.4 331.2 L61.0 331.1 L61.7 331.0 L62.3 330.9 L63.0 330.7 L63.7 330.5 L64.4 330.3 L65.0 330.0 L65.7 329.7 L66.3 329.3 L66.9 328.9 L67.5 328.5 L68.0 328.0 L68.5 327.4 L68.9 326.8 L69.3 326.2 L69.6 325.5 L69.8 324.9 L70.1 324.2 L70.2 323.5 L70.4 322.8 L70.4 322.1 L70.4 321.4 L70.4 320.7 L70.3 320.1 L70.1 319.4 L69.8 318.8 L69.6 318.1 L69.3 317.6 L68.9 317.0 L68.5 316.5 L68.1 316.0 L67.7 315.6 L67.2 315.2 L66.7 314.9 L66.2 314.6 L65.7 314.4 L65.1 314.3 L64.6 314.1 L64.0 314.0 L63.5 314.0 L63.0 314.0 L62.5 314.0 L62.0 314.1 L61.5 314.1 L61.0 314.3 L60.5 314.4 L60.0 314.6 L59.6 314.9 L59.1 315.1 L58.7 315.4 L58.3 315.7 L57.9 316.0 L57.6 316.4 L57.2 316.8 L56.8 317.2 L56.5 317.6 L56.2 318.1 L55.9 318.6 L55.6 319.1 L55.4 319.6 L55.2 320.0 L55.1 320.5 L55.0 321.0 L54.9 321.5 L54.9 322.0 L54.9 322.5 L54.9 323.0 L55.0 323.4 L55.1 323.9 L55.2 324.3 L55.3 324.7 L55.5 325.1 L55.8 325.5 L56.1 325.9 L56.4 326.2 L56.7 326.5 L57.0 326.7 L57.4 326.9 L57.7 327.1 L58.0 327.3 L58.3 327.6 L58.6 327.8 L59.2 327.2 L58.9 326.9 L58.7 326.6 L58.4 326.3 L58.1 326.0 L57.9 325.8 L57.7 325.5 L57.5 325.2 L57.3 325.0 L57.2 324.7 L57.1 324.5 L57.0 324.2 L56.9 323.8 L56.8 323.5 L56.8 323.2 L56.8 322.8 L56.7 322.4 L56.8 322.1 L56.8 321.7 L56.8 321.4 L56.9 321.1 L57.1 320.7 L57.2 320.4 L57.4 320.0 L57.6 319.6 L57.9 319.2 L58.1 318.8 L58.4 318.4 L58.7 318.1 L59.0 317.8 L59.3 317.6 L59.6 317.4 L59.9 317.2 L60.2 317.0 L60.5 316.9 L60.9 316.8 L61.2 316.7 L61.6 316.6 L61.9 316.6 L62.2 316.6 L62.5 316.6 L62.8 316.6 L63.1 316.7 L63.5 316.8 L63.8 316.9 L64.1 317.1 L64.4 317.2 L64.7 317.4 L64.9 317.6 L65.1 317.8 L65.3 318.0 L65.5 318.2 L65.6 318.5 L65.8 318.9 L66.0 319.3 L66.1 319.7 L66.3 320.1 L66.4 320.5 L66.5 320.9 L66.5 321.2 L66.6 321.6 L66.6 321.9 L66.5 322.4 L66.5 322.9 L66.5 323.4 L66.4 323.9 L66.3 324.3 L66.1 324.8 L66.0 325.3 L65.8 325.7 L65.6 326.0 L65.3 326.4 L65.0 326.7 L64.7 327.1 L64.3 327.5 L63.8 327.8 L63.3 328.1 L62.8 328.4 L62.3 328.7 L61.8 328.9 L61.3 329.0 L60.8 329.0 L60.3 329.1 L59.7 329.0 L59.2 329.0 L58.6 328.9 L58.1 328.7 L57.6 328.5 L57.1 328.3 L56.6 328.0 L56.2 327.8 L55.8 327.4 L55.4 327.0 L54.9 326.6 L54.5 326.1 L54.1 325.6 L53.7 325.1 L53.4 324.6 L53.1 324.1 L52.9 323.6 L52.7 323.1 L52.5 322.6 L52.4 322.1 L52.2 321.6 L52.1 321.1 L52.1 320.6 L52.0 320.0 L52.0 319.5 L52.0 319.0 L52.1 318.5 L52.2 318.0 L52.3 317.5 L52.4 316.9 L52.7 316.3 L52.9 315.7 L53.2 315.1 L53.5 314.4 L53.9 313.8 L54.3 313.1 L54.7 312.5 L55.1 312.0 L55.4 311.5 L55.8 311.1 L56.2 310.6 L56.7 310.2 L57.2 309.8 L57.7 309.4 L58.2 308.9 L58.8 308.4 L59.3 307.9 L59.9 307.4 L60.4 306.9 L60.9 306.3 L61.5 305.8 L62.1 305.2 L62.7 304.6 L63.2 304.0 L63.8 303.4 L64.3 302.8 L64.8 302.2 L65.2 301.6 L65.6 301.0 L65.9 300.4 L66.2 299.8 L66.4 299.2 L66.6 298.6 L66.8 298.0 L66.9 297.4 L67.0 296.9 L67.1 296.3 L67.2 295.7 L67.2 295.1 L67.3 294.5 L67.2 293.9 L67.2 293.3 L67.2 292.7 L67.1 292.2 L67.0 291.6 L66.9 291.1 L66.7 290.5 L66.6 290.0 L66.3 289.5 L66.1 289.0 L65.8 288.6 L65.5 288.2 L65.2 287.8 L64.9 287.4 L64.6 287.1 L64.3 286.8 L64.1 286.4 L63.8 286.1Z" fill="#000"/><path d="M62.9 286C60.5 288.5 58.3 292 58.4 297C58.5 300 59.2 304 59.8 307.5L63.8 331.2L65 338C65.6 342 63 345 59.8 344.8C57.8 344.7 56.3 344 55.6 343" fill="none" stroke="#000" stroke-width="1.500" stroke-linecap="round"/><circle cx="55.500" cy="339.700" r="3.400" fill="#000"/></svg>
<div class="s" style="left:95px;top:297px;font-size:19px;color:#000;transform:scaleX(1.32);transform-origin:0 0;-webkit-text-stroke:.35px #000;">4</div>
<div class="s" style="left:95px;top:313px;font-size:19px;color:#000;transform:scaleX(1.32);transform-origin:0 0;-webkit-text-stroke:.35px #000;">4</div>
<div class="s" style="left:45px;top:384px;font-size:15px;color:#000;-webkit-text-stroke:.4px #000;">1</div>
<div class="t" style="left:54px;top:385px;font-size:14px;color:#000;transform:scaleX(1.150);transform-origin:0 0;">=</div>
<div class="t" style="left:65.5px;top:385px;font-size:14px;color:#000;transform:scaleX(1.120);transform-origin:0 0;">C</div>
<div class="s" style="left:95.5px;top:374px;font-size:13px;color:#000;transform:scaleX(1.45);transform-origin:0 0;-webkit-text-stroke:.3px #000;">4</div>
<div class="s" style="left:95.5px;top:393px;font-size:13px;color:#000;transform:scaleX(1.45);transform-origin:0 0;-webkit-text-stroke:.3px #000;">4</div>
<div style="left:93px;top:390px;width:14px;height:1px;background:#111;"></div>
<div class="m" style="left:44px;top:409px;font-size:13px;color:#000;letter-spacing:-1.3px;">1:</div>
<div class="m" style="left:57px;top:409px;font-size:13px;color:#000;">音轨</div>
<div class="m" style="left:91.5px;top:409px;font-size:13px;color:#000;">1</div>
<div style="left:484px;top:452px;width:679px;height:229px;background:#f0f0f0;border:1px solid #a8a8a8;box-shadow:0 2px 9px 1px rgba(0,0,0,.33);"></div>
<div style="left:485px;top:453px;width:677px;height:30px;background:#fff;"></div>
<div class="t" style="left:493px;top:462px;font-size:12px;color:#a6a6a6;">MIDI 键盘</div>
<svg style="left:1142px;top:462px" width="11" height="11"><path d="M.5 .5l10 10M10.500 .5l-10 10" stroke="#9a9a9a" stroke-width="1" fill="none"/></svg>
<div class="t" style="left:501px;top:495px;font-size:12px;color:#000;">滑音</div>
<div class="t" style="left:543px;top:495px;font-size:12px;color:#000;">颤音</div>
<div class="t" style="left:572px;top:495px;font-size:12px;color:#000;">力度</div>
<div class="t" style="left:613px;top:495px;font-size:12px;color:#000;">当前音轨:</div>
<div style="left:675px;top:491px;width:276px;height:18px;background:#f0f0f0;border-top:1px solid #a0a0a0;border-left:1px solid #a0a0a0;border-right:1px solid #fff;border-bottom:1px solid #fff;"></div>
<div class="t" style="left:677px;top:495px;font-size:12px;color:#000;">音轨 1</div>
<div style="left:970px;top:492px;width:13px;height:13px;background:#fff;border:1px solid #333;"><svg width="13" height="13" style="left:-1px;top:-1px"><path d="M2.500 6.500l2.800 2.800 5.200-5.800" fill="none" stroke="#222" stroke-width="1.200"/></svg></div>
<div class="t" style="left:986px;top:494px;font-size:12px;color:#000;">节拍器</div>
<div style="left:1081px;top:492px;width:13px;height:13px;background:#fff;border:1px solid #333;"><svg width="13" height="13" style="left:-1px;top:-1px"><path d="M2.500 6.500l2.800 2.800 5.200-5.800" fill="none" stroke="#222" stroke-width="1.200"/></svg></div>
<div class="t" style="left:1097px;top:494px;font-size:12px;color:#000;">显示音符</div>
<div style="left:493px;top:516px;width:35px;height:20px;background:#f3f3f3;border:1px solid #7a7a7a;overflow:hidden;"></div>
<div class="t" style="left:497px;top:520px;font-size:12px;color:#111;letter-spacing:-0.3px;">8192</div>
<div style="left:541px;top:516px;width:23px;height:20px;background:#f3f3f3;border:1px solid #7a7a7a;overflow:hidden;"></div>
<div class="t" style="left:546px;top:520px;font-size:12px;color:#111;letter-spacing:-0.3px;">64</div>
<div style="left:571px;top:516px;width:23px;height:20px;background:#f3f3f3;border:1px solid #7a7a7a;overflow:hidden;"></div>
<div class="t" style="left:575px;top:520px;font-size:12px;color:#111;letter-spacing:-0.3px;">127</div>
<div style="left:592px;top:517px;width:1px;height:18px;background:#f3f3f3;"></div>
<div class="t" style="left:612px;top:519px;font-size:12px;color:#000;">键数:</div>
<div style="left:643px;top:514px;width:51px;height:21px;background:#e1e1e1;border:1px solid #adadad;"></div>
<div class="t" style="left:648px;top:519px;font-size:12px;color:#111;">61</div>
<svg style="left:681px;top:522px" width="9" height="6"><path d="M.5 .6l4 4 4-4" fill="none" stroke="#444" stroke-width="1.100"/></svg>
<div class="t" style="left:716px;top:519px;font-size:12px;color:#000;">音符布局:</div>
<div style="left:769px;top:514px;width:84px;height:21px;background:#e1e1e1;border:1px solid #adadad;"></div>
<div class="t" style="left:772px;top:519px;font-size:12px;color:#111;">默认</div>
<svg style="left:840px;top:522px" width="9" height="6"><path d="M.5 .6l4 4 4-4" fill="none" stroke="#444" stroke-width="1.100"/></svg>
<div style="left:863px;top:518px;width:13px;height:13px;background:#fff;border:1px solid #333;"><svg width="13" height="13" style="left:-1px;top:-1px"><path d="M2.500 6.500l2.800 2.800 5.200-5.800" fill="none" stroke="#222" stroke-width="1.200"/></svg></div>
<div class="t" style="left:879px;top:519px;font-size:12px;color:#000;">后时值输入</div>
<div class="t" style="left:964px;top:519px;font-size:12px;color:#000;">八度升降:</div>
<div style="left:1016px;top:514px;width:23px;height:21px;background:#f3f3f3;border:1px solid #7a7a7a;border-right-color:#fff;border-bottom-color:#fff;"></div>
<div class="t" style="left:1020px;top:519px;font-size:12px;color:#111;">0</div>
<div style="left:1043px;top:515px;width:15px;height:9px;background:#f0f0f0;border:1px solid #c0c0c0;border-top-color:#fff;border-left-color:#fff;"></div>
<div style="left:1043px;top:525px;width:15px;height:9px;background:#f0f0f0;border:1px solid #c0c0c0;border-top-color:#fff;border-left-color:#fff;"></div>
<svg style="left:1047px;top:517px" width="8" height="16"><path d="M3.500 1l3 3.500h-6zM3.500 14.500l3-3.500h-6z" fill="#222"/></svg>
<div style="left:1080px;top:515px;width:73px;height:19px;background:#e1e1e1;border:1px solid #adadad;"></div>
<div class="t" style="left:1104px;top:518px;font-size:12px;color:#000;">乐器</div>
<div style="left:499px;top:538px;width:23px;height:105px;background:#f0f0f0;border-top:1px solid #a8a8a8;border-left:1px solid #a8a8a8;border-right:1px solid #fff;border-bottom:1px solid #fff;"></div>
<div style="left:507px;top:545px;width:4px;height:92px;background:#e7eaea;border:1px solid #d2d2d2;"></div>
<div style="left:502px;top:587px;width:14px;height:6px;background:#0a78d6;"></div>
<div style="left:541px;top:538px;width:23px;height:105px;background:#f0f0f0;border-top:1px solid #a8a8a8;border-left:1px solid #a8a8a8;border-right:1px solid #fff;border-bottom:1px solid #fff;"></div>
<div style="left:549px;top:545px;width:4px;height:92px;background:#e7eaea;border:1px solid #d2d2d2;"></div>
<div style="left:544px;top:587px;width:14px;height:6px;background:#0a78d6;"></div>
<div style="left:571px;top:538px;width:23px;height:105px;background:#f0f0f0;border-top:1px solid #a8a8a8;border-left:1px solid #a8a8a8;border-right:1px solid #fff;border-bottom:1px solid #fff;"></div>
<div style="left:579px;top:545px;width:4px;height:92px;background:#e7eaea;border:1px solid #d2d2d2;"></div>
<div style="left:574px;top:545px;width:14px;height:6px;background:#0a78d6;"></div>
<div style="left:608px;top:541px;width:19px;height:101px;background:#e1e1e1;border:1px solid #adadad;"></div>
<div class="t" style="left:614px;top:587px;font-size:11px;color:#111;">0</div>
<svg style="left:0;top:0" width="1426" height="752"><defs><linearGradient id="bk" x1="0" y1="0" x2="1" y2="0"><stop offset="0" stop-color="#000"/><stop offset=".55" stop-color="#050505"/><stop offset=".75" stop-color="#3a3a3a"/><stop offset="1" stop-color="#000"/></linearGradient><linearGradient id="bk2" x1="0" y1="0" x2="0" y2="1"><stop offset="0" stop-color="#000" stop-opacity="1"/><stop offset=".25" stop-color="#000" stop-opacity=".9"/><stop offset="1" stop-color="#000" stop-opacity=".15"/></linearGradient><linearGradient id="tp" x1="0" y1="0" x2="0" y2="1"><stop offset="0" stop-color="#555"/><stop offset="1" stop-color="#c8c8c8"/></linearGradient></defs><rect x="634.4" y="541" width="519.2" height="101" fill="#fff"/><rect x="634.4" y="541" width="519.2" height="3.500" fill="url(#tp)"/><rect x="634.4" y="640.2" width="519.2" height="1.800" fill="#8c8c8c"/><rect x="634.4" y="541" width="1.800" height="101" fill="#000"/><rect x="1152.6" y="543" width="1" height="99" fill="#777"/><rect x="648.70" y="542" width="1.400" height="100" fill="#000"/><rect x="663.10" y="542" width="1.400" height="100" fill="#000"/><rect x="677.50" y="542" width="1.400" height="100" fill="#000"/><rect x="691.90" y="542" width="1.400" height="100" fill="#000"/><rect x="706.30" y="542" width="1.400" height="100" fill="#000"/><rect x="720.70" y="542" width="1.400" height="100" fill="#000"/><rect x="735.10" y="542" width="1.400" height="100" fill="#000"/><rect x="749.50" y="542" width="1.400" height="100" fill="#000"/><rect x="763.90" y="542" width="1.400" height="100" fill="#000"/><rect x="778.30" y="542" width="1.400" height="100" fill="#000"/><rect x="792.70" y="542" width="1.400" height="100" fill="#000"/><rect x="807.10" y="542" width="1.400" height="100" fill="#000"/><rect x="821.50" y="542" width="1.400" height="100" fill="#000"/><rect x="835.90" y="542" width="1.400" height="100" fill="#000"/><rect x="850.30" y="542" width="1.400" height="100" fill="#000"/><rect x="864.70" y="542" width="1.400" height="100" fill="#000"/><rect x="879.10" y="542" width="1.400" height="100" fill="#000"/><rect x="893.50" y="542" width="1.400" height="100" fill="#000"/><rect x="907.90" y="542" width="1.400" height="100" fill="#000"/><rect x="922.30" y="542" width="1.400" height="100" fill="#000"/><rect x="936.70" y="542" width="1.400" height="100" fill="#000"/><rect x="951.10" y="542" width="1.400" height="100" fill="#000"/><rect x="965.50" y="542" width="1.400" height="100" fill="#000"/><rect x="979.90" y="542" width="1.400" height="100" fill="#000"/><rect x="994.30" y="542" width="1.400" height="100" fill="#000"/><rect x="1008.70" y="542" width="1.400" height="100" fill="#000"/><rect x="1023.10" y="542" width="1.400" height="100" fill="#000"/><rect x="1037.50" y="542" width="1.400" height="100" fill="#000"/><rect x="1051.90" y="542" width="1.400" height="100" fill="#000"/><rect x="1066.30" y="542" width="1.400" height="100" fill="#000"/><rect x="1080.70" y="542" width="1.400" height="100" fill="#000"/><rect x="1095.10" y="542" width="1.400" height="100" fill="#000"/><rect x="1109.50" y="542" width="1.400" height="100" fill="#000"/><rect x="1123.90" y="542" width="1.400" height="100" fill="#000"/><rect x="1138.30" y="542" width="1.400" height="100" fill="#000"/><rect x="643.9" y="541" width="10.4" height="70.500" fill="#000"/><rect x="650.3" y="565" width="1.9" height="40" fill="#666" opacity=".4"/><rect x="647.0" y="604.5" width="5.2" height="1" fill="#c8c8c8"/><rect x="657.8" y="541" width="10.5" height="70.500" fill="#000"/><rect x="664.3" y="565" width="1.9" height="40" fill="#666" opacity=".4"/><rect x="660.9" y="604.5" width="5.2" height="1" fill="#c8c8c8"/><rect x="686.9" y="541" width="10.5" height="70.500" fill="#000"/><rect x="693.4" y="565" width="1.9" height="40" fill="#666" opacity=".4"/><rect x="690.0" y="604.5" width="5.2" height="1" fill="#c8c8c8"/><rect x="701.7" y="541" width="9.7" height="70.500" fill="#000"/><rect x="707.7" y="565" width="1.7" height="40" fill="#666" opacity=".4"/><rect x="704.6" y="604.5" width="4.8" height="1" fill="#c8c8c8"/><rect x="715.8" y="541" width="10.5" height="70.500" fill="#000"/><rect x="722.3" y="565" width="1.9" height="40" fill="#666" opacity=".4"/><rect x="718.9" y="604.5" width="5.2" height="1" fill="#c8c8c8"/><rect x="744.7" y="541" width="10.4" height="70.500" fill="#000"/><rect x="751.1" y="565" width="1.9" height="40" fill="#666" opacity=".4"/><rect x="747.8" y="604.5" width="5.2" height="1" fill="#c8c8c8"/><rect x="758.6" y="541" width="10.5" height="70.500" fill="#000"/><rect x="765.1" y="565" width="1.9" height="40" fill="#666" opacity=".4"/><rect x="761.7" y="604.5" width="5.2" height="1" fill="#c8c8c8"/><rect x="787.7" y="541" width="10.5" height="70.500" fill="#000"/><rect x="794.2" y="565" width="1.9" height="40" fill="#666" opacity=".4"/><rect x="790.8" y="604.5" width="5.2" height="1" fill="#c8c8c8"/><rect x="802.5" y="541" width="9.7" height="70.500" fill="#000"/><rect x="808.5" y="565" width="1.7" height="40" fill="#666" opacity=".4"/><rect x="805.4" y="604.5" width="4.8" height="1" fill="#c8c8c8"/><rect x="816.6" y="541" width="10.5" height="70.500" fill="#000"/><rect x="823.1" y="565" width="1.9" height="40" fill="#666" opacity=".4"/><rect x="819.7" y="604.5" width="5.2" height="1" fill="#c8c8c8"/><rect x="845.5" y="541" width="10.4" height="70.500" fill="#000"/><rect x="851.9" y="565" width="1.9" height="40" fill="#666" opacity=".4"/><rect x="848.6" y="604.5" width="5.2" height="1" fill="#c8c8c8"/><rect x="859.4" y="541" width="10.5" height="70.500" fill="#000"/><rect x="865.9" y="565" width="1.9" height="40" fill="#666" opacity=".4"/><rect x="862.5" y="604.5" width="5.2" height="1" fill="#c8c8c8"/><rect x="888.5" y="541" width="10.5" height="70.500" fill="#000"/><rect x="895.0" y="565" width="1.9" height="40" fill="#666" opacity=".4"/><rect x="891.6" y="604.5" width="5.2" height="1" fill="#c8c8c8"/><rect x="903.3" y="541" width="9.7" height="70.500" fill="#000"/><rect x="909.3" y="565" width="1.7" height="40" fill="#666" opacity=".4"/><rect x="906.2" y="604.5" width="4.8" height="1" fill="#c8c8c8"/><rect x="917.4" y="541" width="10.5" height="70.500" fill="#000"/><rect x="923.9" y="565" width="1.9" height="40" fill="#666" opacity=".4"/><rect x="920.5" y="604.5" width="5.2" height="1" fill="#c8c8c8"/><rect x="946.3" y="541" width="10.4" height="70.500" fill="#000"/><rect x="952.7" y="565" width="1.9" height="40" fill="#666" opacity=".4"/><rect x="949.4" y="604.5" width="5.2" height="1" fill="#c8c8c8"/><rect x="960.2" y="541" width="10.5" height="70.500" fill="#000"/><rect x="966.7" y="565" width="1.9" height="40" fill="#666" opacity=".4"/><rect x="963.4" y="604.5" width="5.2" height="1" fill="#c8c8c8"/><rect x="989.3" y="541" width="10.5" height="70.500" fill="#000"/><rect x="995.8" y="565" width="1.9" height="40" fill="#666" opacity=".4"/><rect x="992.5" y="604.5" width="5.2" height="1" fill="#c8c8c8"/><rect x="1004.1" y="541" width="9.7" height="70.500" fill="#000"/><rect x="1010.1" y="565" width="1.7" height="40" fill="#666" opacity=".4"/><rect x="1007.0" y="604.5" width="4.8" height="1" fill="#c8c8c8"/><rect x="1018.2" y="541" width="10.5" height="70.500" fill="#000"/><rect x="1024.7" y="565" width="1.9" height="40" fill="#666" opacity=".4"/><rect x="1021.4" y="604.5" width="5.2" height="1" fill="#c8c8c8"/><rect x="1047.1" y="541" width="10.4" height="70.500" fill="#000"/><rect x="1053.5" y="565" width="1.9" height="40" fill="#666" opacity=".4"/><rect x="1050.2" y="604.5" width="5.2" height="1" fill="#c8c8c8"/><rect x="1061.0" y="541" width="10.5" height="70.500" fill="#000"/><rect x="1067.5" y="565" width="1.9" height="40" fill="#666" opacity=".4"/><rect x="1064.2" y="604.5" width="5.2" height="1" fill="#c8c8c8"/><rect x="1090.1" y="541" width="10.5" height="70.500" fill="#000"/><rect x="1096.6" y="565" width="1.9" height="40" fill="#666" opacity=".4"/><rect x="1093.3" y="604.5" width="5.2" height="1" fill="#c8c8c8"/><rect x="1104.9" y="541" width="9.7" height="70.500" fill="#000"/><rect x="1110.9" y="565" width="1.7" height="40" fill="#666" opacity=".4"/><rect x="1107.8" y="604.5" width="4.8" height="1" fill="#c8c8c8"/><rect x="1119.0" y="541" width="10.5" height="70.500" fill="#000"/><rect x="1125.5" y="565" width="1.9" height="40" fill="#666" opacity=".4"/><rect x="1122.2" y="604.5" width="5.2" height="1" fill="#c8c8c8"/></svg>
<div class="t" style="left:637.4px;top:621px;width:10px;text-align:center;font-size:11px;font-weight:bold;color:#000">1</div>
<div style="left:641px;top:632px;width:2px;height:2px;background:#333"></div>
<div style="left:641px;top:635px;width:2px;height:2px;background:#333"></div>
<div class="t" style="left:651.8px;top:621px;width:10px;text-align:center;font-size:11px;font-weight:bold;color:#000">2</div>
<div style="left:656px;top:632px;width:2px;height:2px;background:#333"></div>
<div style="left:656px;top:635px;width:2px;height:2px;background:#333"></div>
<div class="t" style="left:666.2px;top:621px;width:10px;text-align:center;font-size:11px;font-weight:bold;color:#000">3</div>
<div style="left:670px;top:632px;width:2px;height:2px;background:#333"></div>
<div style="left:670px;top:635px;width:2px;height:2px;background:#333"></div>
<div class="t" style="left:680.6px;top:621px;width:10px;text-align:center;font-size:11px;font-weight:bold;color:#000">4</div>
<div style="left:685px;top:632px;width:2px;height:2px;background:#333"></div>
<div style="left:685px;top:635px;width:2px;height:2px;background:#333"></div>
<div class="t" style="left:695.0px;top:621px;width:10px;text-align:center;font-size:11px;font-weight:bold;color:#000">5</div>
<div style="left:699px;top:632px;width:2px;height:2px;background:#333"></div>
<div style="left:699px;top:635px;width:2px;height:2px;background:#333"></div>
<div class="t" style="left:709.4px;top:621px;width:10px;text-align:center;font-size:11px;font-weight:bold;color:#000">6</div>
<div style="left:713px;top:632px;width:2px;height:2px;background:#333"></div>
<div style="left:713px;top:635px;width:2px;height:2px;background:#333"></div>
<div class="t" style="left:723.8px;top:621px;width:10px;text-align:center;font-size:11px;font-weight:bold;color:#000">7</div>
<div style="left:728px;top:632px;width:2px;height:2px;background:#333"></div>
<div style="left:728px;top:635px;width:2px;height:2px;background:#333"></div>
<div class="t" style="left:738.2px;top:621px;width:10px;text-align:center;font-size:11px;font-weight:bold;color:#000">1</div>
<div style="left:742px;top:632px;width:2px;height:2px;background:#333"></div>
<div class="t" style="left:752.6px;top:621px;width:10px;text-align:center;font-size:11px;font-weight:bold;color:#000">2</div>
<div style="left:757px;top:632px;width:2px;height:2px;background:#333"></div>
<div class="t" style="left:767.0px;top:621px;width:10px;text-align:center;font-size:11px;font-weight:bold;color:#000">3</div>
<div style="left:771px;top:632px;width:2px;height:2px;background:#333"></div>
<div class="t" style="left:781.4px;top:621px;width:10px;text-align:center;font-size:11px;font-weight:bold;color:#000">4</div>
<div style="left:785px;top:632px;width:2px;height:2px;background:#333"></div>
<div class="t" style="left:795.8px;top:621px;width:10px;text-align:center;font-size:11px;font-weight:bold;color:#000">5</div>
<div style="left:800px;top:632px;width:2px;height:2px;background:#333"></div>
<div class="t" style="left:810.2px;top:621px;width:10px;text-align:center;font-size:11px;font-weight:bold;color:#000">6</div>
<div style="left:814px;top:632px;width:2px;height:2px;background:#333"></div>
<div class="t" style="left:824.6px;top:621px;width:10px;text-align:center;font-size:11px;font-weight:bold;color:#000">7</div>
<div style="left:829px;top:632px;width:2px;height:2px;background:#333"></div>
<div class="t" style="left:839.0px;top:621px;width:10px;text-align:center;font-size:11px;font-weight:bold;color:#000">1</div>
<div class="t" style="left:853.4px;top:621px;width:10px;text-align:center;font-size:11px;font-weight:bold;color:#000">2</div>
<div class="t" style="left:867.8px;top:621px;width:10px;text-align:center;font-size:11px;font-weight:bold;color:#000">3</div>
<div class="t" style="left:882.2px;top:621px;width:10px;text-align:center;font-size:11px;font-weight:bold;color:#000">4</div>
<div class="t" style="left:896.6px;top:621px;width:10px;text-align:center;font-size:11px;font-weight:bold;color:#000">5</div>
<div class="t" style="left:911.0px;top:621px;width:10px;text-align:center;font-size:11px;font-weight:bold;color:#000">6</div>
<div class="t" style="left:925.4px;top:621px;width:10px;text-align:center;font-size:11px;font-weight:bold;color:#000">7</div>
<div class="t" style="left:939.8px;top:621px;width:10px;text-align:center;font-size:11px;font-weight:bold;color:#000">1</div>
<div style="left:944px;top:617px;width:2px;height:2px;background:#333"></div>
<div class="t" style="left:954.2px;top:621px;width:10px;text-align:center;font-size:11px;font-weight:bold;color:#000">2</div>
<div style="left:958px;top:617px;width:2px;height:2px;background:#333"></div>
<div class="t" style="left:968.6px;top:621px;width:10px;text-align:center;font-size:11px;font-weight:bold;color:#000">3</div>
<div style="left:973px;top:617px;width:2px;height:2px;background:#333"></div>
<div class="t" style="left:983.0px;top:621px;width:10px;text-align:center;font-size:11px;font-weight:bold;color:#000">4</div>
<div style="left:987px;top:617px;width:2px;height:2px;background:#333"></div>
<div class="t" style="left:997.4px;top:621px;width:10px;text-align:center;font-size:11px;font-weight:bold;color:#000">5</div>
<div style="left:1001px;top:617px;width:2px;height:2px;background:#333"></div>
<div class="t" style="left:1011.8px;top:621px;width:10px;text-align:center;font-size:11px;font-weight:bold;color:#000">6</div>
<div style="left:1016px;top:617px;width:2px;height:2px;background:#333"></div>
<div class="t" style="left:1026.2px;top:621px;width:10px;text-align:center;font-size:11px;font-weight:bold;color:#000">7</div>
<div style="left:1030px;top:617px;width:2px;height:2px;background:#333"></div>
<div class="t" style="left:1040.6px;top:621px;width:10px;text-align:center;font-size:11px;font-weight:bold;color:#000">1</div>
<div style="left:1045px;top:617px;width:2px;height:2px;background:#333"></div>
<div style="left:1045px;top:614px;width:2px;height:2px;background:#333"></div>
<div class="t" style="left:1055.0px;top:621px;width:10px;text-align:center;font-size:11px;font-weight:bold;color:#000">2</div>
<div style="left:1059px;top:617px;width:2px;height:2px;background:#333"></div>
<div style="left:1059px;top:614px;width:2px;height:2px;background:#333"></div>
<div class="t" style="left:1069.4px;top:621px;width:10px;text-align:center;font-size:11px;font-weight:bold;color:#000">3</div>
<div style="left:1073px;top:617px;width:2px;height:2px;background:#333"></div>
<div style="left:1073px;top:614px;width:2px;height:2px;background:#333"></div>
<div class="t" style="left:1083.8px;top:621px;width:10px;text-align:center;font-size:11px;font-weight:bold;color:#000">4</div>
<div style="left:1088px;top:617px;width:2px;height:2px;background:#333"></div>
<div style="left:1088px;top:614px;width:2px;height:2px;background:#333"></div>
<div class="t" style="left:1098.2px;top:621px;width:10px;text-align:center;font-size:11px;font-weight:bold;color:#000">5</div>
<div style="left:1102px;top:617px;width:2px;height:2px;background:#333"></div>
<div style="left:1102px;top:614px;width:2px;height:2px;background:#333"></div>
<div class="t" style="left:1112.6px;top:621px;width:10px;text-align:center;font-size:11px;font-weight:bold;color:#000">6</div>
<div style="left:1117px;top:617px;width:2px;height:2px;background:#333"></div>
<div style="left:1117px;top:614px;width:2px;height:2px;background:#333"></div>
<div class="t" style="left:1127.0px;top:621px;width:10px;text-align:center;font-size:11px;font-weight:bold;color:#000">7</div>
<div style="left:1131px;top:617px;width:2px;height:2px;background:#333"></div>
<div style="left:1131px;top:614px;width:2px;height:2px;background:#333"></div>
<div class="t" style="left:1141.4px;top:621px;width:10px;text-align:center;font-size:11px;font-weight:bold;color:#000">1</div>
<div style="left:1145px;top:617px;width:2px;height:2px;background:#333"></div>
<div style="left:1145px;top:614px;width:2px;height:2px;background:#333"></div>
<div style="left:1145px;top:611px;width:2px;height:2px;background:#333"></div>
<div class="t" style="left:839.0px;top:612px;width:10px;text-align:center;font-size:10px;color:#000">C</div>
<div class="t" style="left:839.0px;top:631px;width:10px;text-align:center;font-size:10px;color:#000">5</div>
<div class="t" style="left:489px;top:658px;font-size:12px;color:#000;">时值</div>
<div style="left:529px;top:654px;width:47px;height:20px;background:#fff;border:1px solid #7a7a7a;"></div>
<div class="t" style="left:533px;top:659px;font-size:11px;color:#111;">G</div>
<div style="left:683px;top:650px;width:25px;height:23px;background:#cccccc;border-right:1px solid #fff;border-bottom:1px solid #fff;"></div>
<div class="t" style="left:600.5px;top:653px;font-size:10.5px;color:#111;transform:scaleX(1.4);transform-origin:0 0;">X</div>
<div style="left:600px;top:663px;width:11px;height:1px;background:#222;"></div>
<div style="left:600px;top:666px;width:11px;height:1px;background:#222;"></div>
<div style="left:600px;top:669px;width:11px;height:1px;background:#222;"></div>
<div class="t" style="left:631px;top:653px;font-size:10.5px;color:#111;transform:scaleX(1.4);transform-origin:0 0;">X</div>
<div style="left:630px;top:664px;width:11px;height:1px;background:#222;"></div>
<div style="left:630px;top:667px;width:11px;height:1px;background:#222;"></div>
<div class="t" style="left:660.5px;top:656px;font-size:10.5px;color:#111;transform:scaleX(1.4);transform-origin:0 0;">X</div>
<div style="left:660px;top:668px;width:11px;height:1px;background:#222;"></div>
<div class="t" style="left:692px;top:657px;font-size:15px;color:#111;transform:scaleX(.82);transform-origin:0 0;">X</div>
<div class="t" style="left:719px;top:657px;font-size:15px;color:#111;transform:scaleX(.82);transform-origin:0 0;">X</div>
<div style="left:728px;top:663px;width:4px;height:1px;background:#222;"></div>
<div class="t" style="left:746px;top:657px;font-size:15px;color:#111;transform:scaleX(.82);transform-origin:0 0;">X</div>
<div style="left:755px;top:663px;width:4px;height:1px;background:#222;"></div>
<div style="left:761px;top:663px;width:4px;height:1px;background:#222;"></div>
<div class="t" style="left:775px;top:658px;font-size:14px;color:#111;transform:scaleX(.62);transform-origin:0 0;">X</div>
<div style="left:782px;top:663px;width:3px;height:1px;background:#222;"></div>
<div style="left:787px;top:663px;width:3px;height:1px;background:#222;"></div>
<div style="left:792px;top:663px;width:3px;height:1px;background:#222;"></div>
<div style="left:822px;top:664px;width:2px;height:2px;background:#222;"></div>
<div style="left:849px;top:664px;width:2px;height:2px;background:#222;"></div>
<div style="left:854px;top:664px;width:2px;height:2px;background:#222;"></div>
<div class="t" style="left:878px;top:657px;font-size:12px;color:#111;transform:scaleX(.8);transform-origin:0 0;">3</div>
<svg style="left:871px;top:660px" width="22" height="8"><path d="M.5 6.500q3-4 6-3.500M14.500 3q3 .5 6 4" fill="none" stroke="#222" stroke-width="1"/></svg>
<div style="left:902px;top:655px;width:13px;height:13px;background:#fff;border:1px solid #333;"></div>
<div class="t" style="left:918px;top:656px;font-size:12px;color:#000;">和弦</div>
<div style="left:953px;top:655px;width:13px;height:13px;background:#fff;border:1px solid #333;"></div>
<div class="t" style="left:969px;top:656px;font-size:12px;color:#000;">输入音符</div>
<div style="left:1022px;top:651px;width:64px;height:21px;background:#e1e1e1;border:1px solid #adadad;"></div>
<div class="t" style="left:1030px;top:655px;font-size:12px;color:#000;">鼠标输入</div>
<div style="left:1089px;top:651px;width:64px;height:21px;background:#e1e1e1;border:1px solid #adadad;"></div>
<div class="t" style="left:1097px;top:655px;font-size:12px;color:#000;">键盘输入</div>
<div style="left:1158px;top:670px;width:2px;height:2px;background:#bcbcbc;"></div>
<div style="left:1155px;top:673px;width:2px;height:2px;background:#bcbcbc;"></div>
<div style="left:1158px;top:673px;width:2px;height:2px;background:#bcbcbc;"></div>
<div style="left:1152px;top:676px;width:2px;height:2px;background:#bcbcbc;"></div>
<div style="left:1155px;top:676px;width:2px;height:2px;background:#bcbcbc;"></div>
<div style="left:1158px;top:676px;width:2px;height:2px;background:#bcbcbc;"></div>
<div style="left:1px;top:727px;width:1424px;height:24px;background:#f0f0f0;"></div>
<div style="left:1px;top:727px;width:1424px;height:1px;background:#e6e6e6;"></div>
<div style="left:1px;top:728px;width:1424px;height:1px;background:#fff;"></div>
<div style="left:1px;top:729px;width:1424px;height:1px;background:#dcdcdc;"></div>
<div class="t" style="left:4px;top:735px;font-size:12px;color:#000;">Ready</div>
<div style="left:1421px;top:741px;width:2px;height:2px;background:#a4a4a4;"></div>
<div style="left:1418px;top:744px;width:2px;height:2px;background:#a4a4a4;"></div>
<div style="left:1421px;top:744px;width:2px;height:2px;background:#a4a4a4;"></div>
<div style="left:1415px;top:747px;width:2px;height:2px;background:#a4a4a4;"></div>
<div style="left:1418px;top:747px;width:2px;height:2px;background:#a4a4a4;"></div>
<div style="left:1421px;top:747px;width:2px;height:2px;background:#a4a4a4;"></div>
<div style="left:1423px;top:88px;width:1px;height:639px;background:#dce9f5;"></div>
<div style="left:1424px;top:1px;width:1px;height:750px;background:#e2f4fb;"></div>
<div style="left:0px;top:750px;width:1426px;height:1px;background:#dff4fb;"></div>
<div style="left:0px;top:751px;width:1426px;height:1px;background:#3f6e8c;"></div>
<div style="left:0px;top:0px;width:1px;height:752px;background:#44739a;"></div>
<div style="left:1425px;top:0px;width:1px;height:752px;background:#3f6e8c;"></div>
<div style="left:0px;top:0px;width:1426px;height:1px;background:#3f6e8c;"></div>
<svg style="left:0;top:0;opacity:.86" width="70" height="66" viewBox="0 0 70 66"><defs><clipPath id="lc"><path d="M0 0H70V30C60 42 40 47 5 43L0 44z"/></clipPath></defs><g clip-path="url(#lc)"><ellipse cx="27" cy="28" rx="25" ry="21.500" fill="#4a9ddb"/><path d="M5.500 37.500C6 28 16 20.500 29.500 21" fill="none" stroke="#fff" stroke-width="1.700"/><path d="M10.500 34.500L23.700 25v22H15.800V34.800z" fill="#fff"/><path d="M33 21.500c6-1 10.500 1 12 5-1 5-5.500 8.500-12 10z" fill="#fff"/></g><path d="M5 47.500c3 2 6 3 9.500 3.600V56C10 54 7 51 5 47.500z" fill="#f5a24c"/><path d="M23.700 43.500h8.800v6.300C42 47 50 40 54.500 29.500 57.500 40 53 52 41 57.500 38 58.800 35 59.600 32.500 60v1.800h-8.800z" fill="#f5a24c"/></svg>
<div class="s" style="left:61.5px;top:14px;font-size:26px;color:#419fe6;opacity:.85;letter-spacing:.6px;font-weight:900;-webkit-text-stroke:.5px #419fe6;text-shadow:0 0 2px #fff,0 0 2px #fff;">河东软件园</div>
<div class="s" style="left:62px;top:43.2px;font-size:17.5px;color:#5ab45a;opacity:.9;transform:scaleX(1.150);transform-origin:0 0;-webkit-text-stroke:.4px #5ab45a;">www.pc0359.cn</div>
<div class="t" style="left:30px;top:10px;font-size:12px;color:#1a1a1a;letter-spacing:.15px;">酷特音乐风(共享版) V9.50</div>
<svg style="left:9px;top:6px" width="17" height="16" viewBox="0 0 17 16"><path d="M2.500 3.500l1.500-1.500 2 .5 1 1.500M3 5.500l2 1.500M8 2.500h5.500v2" fill="none" stroke="#1a1a1a" stroke-width="1.100" stroke-dasharray="1.600 .7"/><path d="M.5 11c0-2.500 1.500-4.500 4-4.800l2.500 1.800 1.500-3h6.500v10h-5.500l-1-1.500-1.500 1.500h-5c-1 0-1.500-1.500-1.500-4z" fill="#1778bd"/><rect x="9.500" y="10" width="2.200" height="3.500" fill="#d8ecfa"/><circle cx="4.500" cy="11.500" r="1" fill="#48b8f0"/><circle cx="7" cy="8.500" r=".8" fill="#6cc4f4"/></svg>
</body></html>
